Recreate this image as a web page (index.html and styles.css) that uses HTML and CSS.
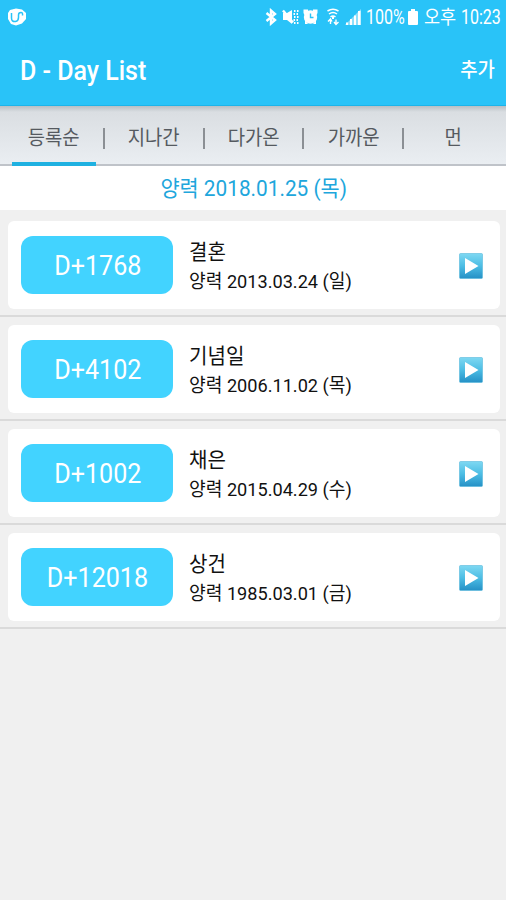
FILE: index.html
```
<!DOCTYPE html>
<html lang="ko">
    <head>
        <meta charset="utf-8">
        <title>D - Day List</title>
        <link rel="stylesheet" href="styles.css">
    </head>
    <body>
        <svg class="defs" width="0" height="0">
            <defs>
                <linearGradient id="blue" x1="0" y1="0" x2="0" y2="1">
                    <stop offset="0" stop-color="#7ed8f2"/>
                    <stop offset="0.5" stop-color="#4cbde4"/>
                    <stop offset="1" stop-color="#2590c6"/>
                </linearGradient>
                <symbol id="play" viewBox="0 0 24 26">
                    <rect x="0.5" y="0.5" width="23" height="25" rx="1" fill="url(#blue)" stroke="#58b8dc" stroke-width="0.6"/>
                    <path d="M6 5V21L19.500 13Z" fill="#fff"/>
                </symbol>
            </defs>
        </svg>
        <header class="header">
            <div class="status">
                <svg class="logo" width="20" height="18" viewBox="0 0 20 18">
                    <path d="M3 2L9 0.5L15 1.5L19 5V11L15 15.5L9 17.5L4 16L1 11V5Z" fill="#fff"/>
                    <path d="M4.500 5v5q0 4 4 3.500q3-.5 3-4V7q0-2.500 2.500-2.500q2 0 1.500 3" fill="none" stroke="#29c3f8" stroke-width="1.500"/>
                </svg>
                <svg class="bluetooth" width="12" height="18" viewBox="0 0 12 18">
                    <path d="M1.500 5L10 12L6 15.500V2.500L10 6L1.500 13" fill="none" stroke="#fff" stroke-width="2.400"/>
                </svg>
                <svg class="mute" width="17" height="18" viewBox="0 0 17 18">
                    <path d="M1 5H5L10 2V16L5 12H1Z" fill="#fff"/>
                    <path d="M1 2.500L11 14.500" stroke="#fff" stroke-width="2.400"/>
                    <path d="M12 3h1.500M15 3h1.500M11.500 6h1.500M14.500 6h1.500M12 9h1.500M15 9h1.500M11.500 12h1.500M14.500 12h1.500M12 15h1.500M15 15h1.500" stroke="#fff" stroke-width="2"/>
                </svg>
                <svg class="alarm" width="15" height="18" viewBox="0 0 15 18">
                    <circle cx="7.500" cy="9" r="6.700" fill="#fff"/>
                    <path d="M0.500 1.500H5V5L1.500 7L0.500 5ZM14.500 1.500H10V5L13.500 7L14.500 5ZM2 12V16H5ZM13 12V16H10Z" fill="#fff"/>
                    <path d="M7.500 5.500V9.500H10.500" fill="none" stroke="#29c3f8" stroke-width="1.400"/>
                </svg>
                <svg class="wifi" width="12" height="18" viewBox="0 0 12 18">
                    <path d="M0.500 3Q6-.5 11.500 3M2 6Q6 3 10 6M3.500 8.800Q6 7 8.500 8.800" fill="none" stroke="#fff" stroke-width="1.500"/>
                    <path d="M5 8h2v3H5z" fill="#fff"/>
                    <path d="M1 13.500L3.500 11L5 13.500M3.500 11.500V16M7 14l2 2.500l2.500-2.500M9 16V11.500" fill="none" stroke="#fff" stroke-width="1.400"/>
                </svg>
                <svg class="signal" width="16" height="18" viewBox="0 0 16 18">
                    <path d="M0 17L16 1V17Z" fill="#8edffb"/>
                    <path d="M1 14.500h2V17H1zM5 11h2v6H5zM9 7.500h2V17H9zM13 3h2.500v14H13z" fill="#fff"/>
                </svg>
                <span class="percent"><span>100%</span></span>
                <svg class="battery" width="10" height="18" viewBox="0 0 10 18">
                    <path d="M3 1H7V3H9Q10 3 10 4V16Q10 17 9 17H1Q0 17 0 16V4Q0 3 1 3H3Z" fill="#fff"/>
                </svg>
                <span class="noon"><span>오후</span></span>
                <span class="time"><span>10:23</span></span>
            </div>
            <div class="bar">
                <h1 class="title"><span>D - Day List</span></h1>
                <div class="add"><span>추가</span></div>
            </div>
        </header>
        <nav class="tabs">
            <div class="tab active"><span>등록순</span></div>
            <div class="tab"><span>지나간</span></div>
            <div class="tab"><span>다가온</span></div>
            <div class="tab"><span>가까운</span></div>
            <div class="tab"><span>먼</span></div>
        </nav>
        <div class="today"><span>양력 2018.01.25 (목)</span></div>
        <main class="list">
            <div class="row">
                <div class="card">
                    <div class="count"><span>D+1768</span></div>
                    <div class="info">
                        <div class="name"><span>결혼</span></div>
                        <div class="date"><span>양력 2013.03.24 (일)</span></div>
                    </div>
                    <svg class="play" width="24" height="26"><use href="#play"/></svg>
                </div>
            </div>
            <div class="row">
                <div class="card">
                    <div class="count"><span>D+4102</span></div>
                    <div class="info">
                        <div class="name"><span>기념일</span></div>
                        <div class="date"><span>양력 2006.11.02 (목)</span></div>
                    </div>
                    <svg class="play" width="24" height="26"><use href="#play"/></svg>
                </div>
            </div>
            <div class="row">
                <div class="card">
                    <div class="count"><span>D+1002</span></div>
                    <div class="info">
                        <div class="name"><span>채은</span></div>
                        <div class="date"><span>양력 2015.04.29 (수)</span></div>
                    </div>
                    <svg class="play" width="24" height="26"><use href="#play"/></svg>
                </div>
            </div>
            <div class="row">
                <div class="card">
                    <div class="count"><span>D+12018</span></div>
                    <div class="info">
                        <div class="name"><span>상건</span></div>
                        <div class="date"><span>양력 1985.03.01 (금)</span></div>
                    </div>
                    <svg class="play" width="24" height="26"><use href="#play"/></svg>
                </div>
            </div>
        </main>
    </body>
</html>
```
FILE: styles.css
```
* {
    box-sizing: border-box;
}
body {
    margin: 0;
    min-height: 900px;
    background-color: #f0f0f0;
    font-family: Roboto, "Noto Sans CJK KR", sans-serif;
    color: #111;
}
.defs {
    display: block;
}
span {
    display: inline-block;
    white-space: nowrap;
}
.header {
    height: 106px;
    background-color: #29c3f8;
    border-bottom: 1px solid #1cb4ea;
    color: white;
}
.status {
    display: flex;
    align-items: center;
    height: 34px;
    padding: 0 6px 0 7px;
    font-size: 20px;
    line-height: 35px;
}
.bluetooth {
    margin-left: auto;
    margin-right: 5px;
}
.mute {
    margin-right: 4px;
}
.alarm {
    margin-right: 9px;
}
.wifi {
    margin-right: 6px;
}
.signal {
    margin-right: 5px;
}
.percent,
.noon,
.time {
    height: 34px;
}
.percent span,
.noon span,
.time span {
    transform: scaleX(0.8);
    transform-origin: left;
}
.percent {
    width: 42px;
}
.battery {
    margin-right: 6px;
}
.noon {
    width: 37px;
    font-size: 19px;
}
.noon span {
    transform: scaleX(0.92);
}
.time {
    width: 39px;
}
.bar {
    display: flex;
    justify-content: space-between;
    align-items: center;
    height: 71px;
    padding: 2px 11px 0 20px;
}
.title {
    margin: 0;
    font-size: 27px;
    font-weight: 500;
}
.title span {
    transform: scaleX(0.925);
    transform-origin: left;
}
.add {
    padding-bottom: 4px;
    font-size: 20px;
    font-weight: 500;
}
.add span {
    transform: scaleX(0.94);
    transform-origin: right;
}
.tabs {
    display: flex;
    height: 60px;
    padding: 0 3px 0 4px;
    background: linear-gradient(#b9bfc4, #dadee2 6px, #eaeef2);
    border-bottom: 2px solid #bfc3c9;
}
.tab {
    display: flex;
    flex: 1;
    align-items: center;
    justify-content: center;
    position: relative;
    padding-top: 2px;
    font-size: 20px;
    color: #555a60;
}
.tab span {
    transform: scaleX(0.94);
}
.tab + .tab::before {
    content: "";
    position: absolute;
    left: -1px;
    top: 22px;
    width: 2px;
    height: 21px;
    background-color: #8b8f94;
}
.tab.active::after {
    content: "";
    position: absolute;
    left: 8px;
    right: 8px;
    bottom: -2px;
    height: 4px;
    background-color: #1fb1e1;
}
.today {
    height: 44px;
    padding-left: 2px;
    background-color: white;
    color: #20a6dc;
    font-size: 22px;
    line-height: 46px;
    text-align: center;
}
.today span {
    transform: scaleX(0.945);
}
.list {
    padding-top: 3px;
}
.row {
    height: 104.1px;
    padding: 8px 6px 7px 8px;
    border-bottom: 2px solid #dadada;
}
.card {
    display: flex;
    align-items: center;
    height: 88px;
    padding: 0 17px 0 13px;
    background-color: white;
    border-radius: 6px;
}
.count {
    width: 152px;
    height: 58px;
    padding-left: 1px;
    border-radius: 12px;
    background-color: #42d3ff;
    color: white;
    font-size: 27px;
    line-height: 61px;
    text-align: center;
}
.count span {
    transform: scaleX(0.93);
}
.info {
    margin-left: 16px;
}
.name {
    height: 30px;
    font-size: 21px;
    line-height: 33px;
}
.date {
    height: 29px;
    font-size: 19px;
    line-height: 31px;
}
.name span,
.date span {
    transform: scaleX(0.955);
    transform-origin: left;
}
.play {
    margin-left: auto;
    margin-top: 2px;
}
```
